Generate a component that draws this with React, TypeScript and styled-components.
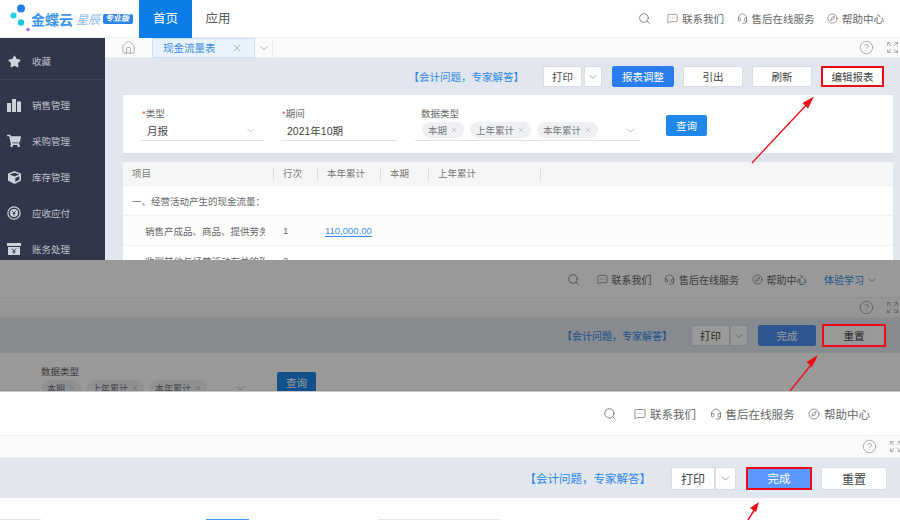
import React from 'react';
import styled, { createGlobalStyle } from 'styled-components';
import { Search, MessageSquareMore, Headset, Compass, House, X, ChevronDown, CircleHelp, Expand } from 'lucide-react';
import { FaStar, FaShoppingCart, FaCube } from 'react-icons/fa';

const Global = createGlobalStyle`
  html, body { margin: 0; padding: 0; background: #fff; }
  body { font-family: "Liberation Sans", "Noto Sans CJK SC", sans-serif; color: #555; }
  * { box-sizing: border-box; }
`;

const Page = styled.div`
  width: 900px; height: 520px; overflow: hidden;
  display: flex; flex-direction: column;
`;
const Panel = styled.section<{ $h: number; $dim?: boolean }>`
  position: relative; height: ${p => p.$h}px; overflow: hidden; flex: none; isolation: isolate;
  display: flex; flex-direction: column; background: #fff;
  ${p => p.$dim ? `&::after { content: ""; position: absolute; inset: 0; background: rgba(0,0,0,.4); z-index: 1; }` : ''}
`;
const TopBar = styled.header<{ $h: number; $pr: number; $fs: number; $pt?: number }>`
  height: ${p => p.$h}px; flex: none; display: flex; align-items: center; background: #fff;
  padding-right: ${p => p.$pr}px; padding-top: ${p => p.$pt ?? 0}px; font-size: ${p => p.$fs}px; border-bottom: 1px solid #eef0f3;
`;
const Logo = styled.div`
  width: 139px; height: 38px; position: relative; flex: none; display: flex; align-items: center; padding: 0 0 0 31px;
`;
const LogoDots = styled.svg`
  position: absolute; left: 0; top: 0;
`;
const LogoWord = styled.span`
  color: #3a94ee; font-size: 14px; font-weight: 700;
`;
const LogoStar = styled.span`
  color: #8dbdf2; font-size: 12px; font-style: italic; margin-left: 3px;
`;
const LogoBadge = styled.span`
  background: #2a83e6; color: #fff; font-size: 8px; font-style: italic; font-weight: 700;
  margin-left: 3px; padding: 0 2px; height: 10px; line-height: 10px; border-radius: 2px; width: 30px; white-space: nowrap;
`;
const NavItem = styled.div<{ $on?: boolean }>`
  width: ${p => p.$on ? 53 : 52}px; height: 38px; line-height: 38px; text-align: center; font-size: 12.5px; flex: none;
  color: ${p => p.$on ? '#fff' : '#555'}; background: ${p => p.$on ? '#0a7de8' : 'transparent'};
`;
const Actions = styled.div<{ $gap: number }>`
  margin-left: auto; display: flex; align-items: center; gap: ${p => p.$gap}px; color: #666;
`;
const Action = styled.span<{ $accent?: boolean }>`
  display: inline-flex; align-items: center; gap: 4px; white-space: nowrap;
  color: ${p => p.$accent ? '#3d8fe8' : '#666'};
`;
const SearchIcon = styled(Search)<{ $mr: number }>`
  margin-right: ${p => p.$mr}px;
`;
const AccentChevron = styled(ChevronDown)`
  margin-left: -2px; color: #777;
`;
const LearnAction = styled(Action)`
  margin-left: 5px;
`;
const TabRow = styled.div<{ $h: number }>`
  height: ${p => p.$h}px; flex: none; background: #fafafa; display: flex; align-items: center;
  border-bottom: 1px solid #eceef2; color: #8a8a8a;
`;
const HomeBox = styled.span`
  width: 47px; flex: none; display: flex; justify-content: center;
`;
const Tab = styled.div`
  width: 103px; height: 20px; display: flex; align-items: center; justify-content: space-between; flex: none;
  padding: 0 11px 0 10px; background: #e8f3fe; border: 1px solid #c6e0fa; color: #3e8be0; font-size: 10.5px;
`;
const TabMenu = styled.span`
  width: 17px; height: 20px; margin-left: 1px; display: flex; align-items: center; justify-content: center;
  border-right: 1px solid #eceef2; flex: none;
`;
const TabTools = styled.div<{ $mr: number }>`
  margin-left: auto; display: flex; align-items: center; gap: 12px; margin-right: ${p => p.$mr}px; color: #8c8c8c;
`;
const ToolBar = styled.div<{ $h: number; $pr: number }>`
  height: ${p => p.$h}px; flex: none; display: flex; align-items: center; justify-content: flex-end;
  padding-right: ${p => p.$pr}px; background: #e1e6ef;
`;
const AskLink = styled.span<{ $mr: number; $fs: number }>`
  color: #2c86e8; font-size: ${p => p.$fs}px; margin-right: ${p => p.$mr}px; white-space: nowrap;
`;
const Btn = styled.div<{ $w: number; $h?: number; $primary?: string; $ml?: number; $fs?: number }>`
  position: relative; width: ${p => p.$w}px; height: ${p => p.$h ?? 21}px; flex: none;
  margin-left: ${p => p.$ml ?? 0}px; display: flex; align-items: center; justify-content: center;
  font-size: ${p => p.$fs ?? 10.5}px; border-radius: 2px;
  color: ${p => p.$primary ? '#fff' : '#444'};
  background: ${p => p.$primary ?? '#fff'};
  border: 1px solid ${p => p.$primary ?? '#d9dce3'};
`;
const RedFrame = styled.i<{ $inset: number }>`
  position: absolute; inset: -${p => p.$inset}px; border: 2.5px solid #ee0a14; z-index: 2; pointer-events: none;
`;
const Arrow = styled.svg`
  position: absolute; left: 0; top: 0; z-index: 3; pointer-events: none;
`;
const Body = styled.div`
  flex: 1; min-height: 0; display: flex;
`;
const Side = styled.nav`
  width: 105px; flex: none; background: #32364a; display: flex; flex-direction: column; padding-top: 5px; overflow: hidden;
`;
const SideItem = styled.div<{ $first?: boolean }>`
  height: ${p => p.$first ? 37 : 36}px; flex: none; display: flex; align-items: center; gap: 11px; padding-left: 7px;
  color: #bfc2cc; font-size: 9.5px;
  ${p => p.$first ? 'border-bottom: 1px solid #3f4357; margin-bottom: 7px;' : ''}
`;
const SideIcon = styled.span`
  width: 14px; height: 14px; display: flex; align-items: center; justify-content: center; color: #cfd2d9; flex: none;
`;
const Main = styled.div`
  flex: 1; min-width: 0; display: flex; flex-direction: column; overflow: hidden;
`;
const Content = styled.div<{ $pl: number; $pr: number }>`
  flex: 1; min-height: 0; background: #e1e6ef; padding: 0 ${p => p.$pr}px 0 ${p => p.$pl}px; overflow: hidden;
`;
const FilterCard = styled.div<{ $h: number }>`
  height: ${p => p.$h}px; background: #fff; display: flex; align-items: flex-start; position: relative;
`;
const Field = styled.div<{ $w: number; $ml: number }>`
  width: ${p => p.$w}px; margin-left: ${p => p.$ml}px; flex: none; padding-top: 12px; font-size: 9.5px; color: #666;
`;
const Req = styled.b`
  color: #f25a5a; font-weight: 400;
`;
const FieldLabel = styled.div<{ $pl?: number }>`
  height: 13px; line-height: 13px; padding-left: ${p => p.$pl ?? 1}px;
`;
const FieldValue = styled.div`
  height: 21px; display: flex; align-items: center; justify-content: space-between; gap: 6px;
  border-bottom: 1px solid #dfe2e8; color: #444; font-size: 10.5px; padding: 0 8px 0 6px; white-space: nowrap;
`;
const TagRow = styled.div<{ $pl: number }>`
  height: 21px; display: flex; align-items: center; gap: 6px; border-bottom: 1px solid #dfe2e8; padding: 0 3px 0 ${p => p.$pl}px;
`;
const TagChip = styled.span<{ $fs: number; $pad: number }>`
  height: 16px; display: inline-flex; align-items: center; gap: 3px; border-radius: 8px; background: #eef0f3;
  padding: 0 ${p => p.$pad}px; color: #777; font-size: ${p => p.$fs}px; white-space: nowrap;
`;
const TagEnd = styled.span`
  flex: 1; display: flex; justify-content: flex-end; color: #999;
`;
const Query = styled.div<{ $w: number; $ml: number; $top: number }>`
  width: ${p => p.$w}px; height: 21px; margin-left: ${p => p.$ml}px; margin-top: ${p => p.$top}px; flex: none; background: #1f86ea;
  color: #fff; font-size: 10.5px; display: flex; align-items: center; justify-content: center; border-radius: 2px;
`;
const Gap = styled.div`
  height: 9px; background: #dfe3ec;
`;
const TableRow = styled.div<{ $head?: boolean; $alt?: boolean }>`
  display: grid; grid-template-columns: 151px 44px 63px 48px 112px 1fr; align-items: center;
  height: ${p => p.$head ? 24 : 30}px; font-size: 9.5px; color: ${p => p.$head ? '#777' : '#666'};
  background: ${p => p.$head ? '#f6f6f6' : p.$alt ? '#fcfcfc' : '#fff'};
  border-bottom: 1px solid #f0f1f3;
`;
const HeadCell = styled.div`
  padding-left: 9px; height: 12px; line-height: 12px; border-right: 1px solid #dcdde0;
`;
const Section = styled.div`
  padding-left: 9px; white-space: nowrap; grid-column: 1 / -1;
`;
const NameCell = styled.div`
  padding-left: 22px; width: 142px; white-space: nowrap; overflow: hidden;
`;
const NumCell = styled.div`
  padding-left: 9px;
`;
const Amount = styled.span`
  color: #3b8fe6; border-bottom: 1px solid #3b8fe6; margin-left: 7px; font-size: 9.5px; line-height: 11px; display: inline-block;
`;
const Strip = styled.div`
  height: 1px; background: #c8c8c8; flex: none;
`;
const PeekLine = styled.div`
  display: flex; height: 1px; margin-top: 21px; flex: none;
`;
const PeekSeg = styled.span<{ $w: number; $ml?: number; $c: string }>`
  width: ${p => p.$w}px; margin-left: ${p => p.$ml ?? 0}px; background: ${p => p.$c};
`;

const Dots = () => (
  <LogoDots width="40" height="38" viewBox="0 0 40 38">
    <circle cx="21" cy="8.5" r="4" fill="#1f7fe8" />
    <circle cx="13.5" cy="15.5" r="3" fill="#1fd0e0" />
    <circle cx="21" cy="22.5" r="3.2" fill="#1fc6dc" />
    <circle cx="28" cy="29.5" r="1.8" fill="#9a6de8" />
  </LogoDots>
);
const Bars = () => (
  <svg width="14" height="14" viewBox="0 0 14 14" fill="currentColor">
    <rect x="0" y="5" width="4" height="9" /><rect x="5" y="1" width="4" height="13" /><rect x="10" y="3.5" width="4" height="10.5" />
  </svg>
);
const Coin = () => (
  <svg width="16" height="16" viewBox="0 0 16 16" fill="none" stroke="currentColor">
    <circle cx="8" cy="8" r="7" strokeWidth="1.4" />
    <circle cx="8" cy="8" r="4.6" fill="currentColor" stroke="none" />
    <path d="M6 5.6 8 8l2-2.4M8 8v3M6.4 8.6h3.2" stroke="#32364a" strokeWidth="1" />
  </svg>
);
const Ledger = () => (
  <svg width="14" height="14" viewBox="0 0 14 14">
    <path d="M0 1h14v3H0zM1 5h12v8H1z" fill="currentColor" />
    <path d="M5 6.5 7 9l2-2.5M7 9v3M5.4 9.8h3.2" stroke="#32364a" strokeWidth=".9" fill="none" />
  </svg>
);

const HeaderActions = ({ size, gap, searchMr, extra }: { size: number; gap: number; searchMr: number; extra?: boolean }) => (
  <Actions $gap={gap}>
    <SearchIcon $mr={searchMr} size={size + 2} strokeWidth={1.4} />
    <Action><MessageSquareMore size={size} strokeWidth={1.4} />联系我们</Action>
    <Action><Headset size={size} strokeWidth={1.4} />售后在线服务</Action>
    <Action><Compass size={size} strokeWidth={1.4} />帮助中心</Action>
    {extra && <LearnAction $accent>体验学习<AccentChevron size={12} strokeWidth={1.4} /></LearnAction>}
  </Actions>
);
const Tools = ({ mr }: { mr: number }) => (
  <TabTools $mr={mr}>
    <CircleHelp size={15} strokeWidth={1.1} />
    <Expand size={13} strokeWidth={1.3} />
  </TabTools>
);
const Chip = ({ children, fs, pad }: { children: React.ReactNode; fs: number; pad: number }) => (
  <TagChip $fs={fs} $pad={pad}>{children}<X size={8} strokeWidth={1.3} color="#999" /></TagChip>
);
const Chips = ({ fs, pad }: { fs: number; pad: number }) => (
  <>
    <Chip fs={fs} pad={pad}>本期</Chip><Chip fs={fs} pad={pad}>上年累计</Chip><Chip fs={fs} pad={pad}>本年累计</Chip>
  </>
);

export default function App() {
  return (
    <Page>
      <Global />
      <Panel $h={260}>
        <TopBar $h={38} $pr={16} $fs={10.5}>
          <Logo>
            <Dots />
            <LogoWord>金蝶云</LogoWord><LogoStar>星辰</LogoStar><LogoBadge>专业版</LogoBadge>
          </Logo>
          <NavItem $on>首页</NavItem>
          <NavItem>应用</NavItem>
          <HeaderActions size={11} gap={12.5} searchMr={4} />
        </TopBar>
        <Body>
          <Side>
            <SideItem $first><SideIcon><FaStar size={13} /></SideIcon>收藏</SideItem>
            <SideItem><SideIcon><Bars /></SideIcon>销售管理</SideItem>
            <SideItem><SideIcon><FaShoppingCart size={14} /></SideIcon>采购管理</SideItem>
            <SideItem><SideIcon><FaCube size={13} /></SideIcon>库存管理</SideItem>
            <SideItem><SideIcon><Coin /></SideIcon>应收应付</SideItem>
            <SideItem><SideIcon><Ledger /></SideIcon>账务处理</SideItem>
          </Side>
          <Main>
            <TabRow $h={20}>
              <HomeBox><House size={15} strokeWidth={1.1} /></HomeBox>
              <Tab>现金流量表<X size={12} strokeWidth={1.2} color="#8a8a8a" /></Tab>
              <TabMenu><ChevronDown size={14} strokeWidth={1.2} /></TabMenu>
              <Tools mr={1} />
            </TabRow>
            <ToolBar $h={37} $pr={16}>
              <AskLink $mr={19} $fs={10.5}>【会计问题，专家解答】</AskLink>
              <Btn $w={39}>打印</Btn>
              <Btn $w={18} $ml={2}><ChevronDown size={12} strokeWidth={1.3} color="#777" /></Btn>
              <Btn $w={62} $ml={10} $primary="#2a7df0">报表调整</Btn>
              <Btn $w={60} $ml={9}>引出</Btn>
              <Btn $w={60} $ml={9}>刷新</Btn>
              <Btn $w={63} $ml={9}>编辑报表<RedFrame $inset={1} /></Btn>
            </ToolBar>
            <Content $pl={18} $pr={7}>
              <FilterCard $h={58}>
                <Field $w={123} $ml={18}>
                  <FieldLabel><Req>*</Req>类型</FieldLabel>
                  <FieldValue>月报<ChevronDown size={11} strokeWidth={1.2} color="#888" /></FieldValue>
                </Field>
                <Field $w={116} $ml={17}>
                  <FieldLabel><Req>*</Req>期间</FieldLabel>
                  <FieldValue>2021年10期</FieldValue>
                </Field>
                <Field $w={225} $ml={18}>
                  <FieldLabel $pl={6}>数据类型</FieldLabel>
                  <TagRow $pl={7}><Chips fs={9.5} pad={6} /><TagEnd><ChevronDown size={13} strokeWidth={1.2} /></TagEnd></TagRow>
                </Field>
                <Query $w={41} $ml={26} $top={20}>查询</Query>
              </FilterCard>
              <Gap />
              <TableRow $head>
                <HeadCell>项目</HeadCell><HeadCell>行次</HeadCell><HeadCell>本年累计</HeadCell>
                <HeadCell>本期</HeadCell><HeadCell>上年累计</HeadCell>
              </TableRow>
              <TableRow><Section>一、经营活动产生的现金流量：</Section></TableRow>
              <TableRow $alt>
                <NameCell>销售产成品、商品、提供劳务收到的现金</NameCell>
                <NumCell>1</NumCell><div><Amount>110,000.00</Amount></div>
              </TableRow>
              <TableRow>
                <NameCell>收到其他与经营活动有关的现金</NameCell>
                <NumCell>2</NumCell>
              </TableRow>
            </Content>
          </Main>
        </Body>
        <Arrow width="900" height="260" viewBox="0 0 900 260">
          <path d="M752 163 810 101" stroke="#ee0a14" strokeWidth="1.3" fill="none" />
          <path d="M814 96.5 802.5 103 808 108.5Z" fill="#ee0a14" />
        </Arrow>
      </Panel>

      <Panel $h={131} $dim>
        <TopBar $h={38} $pr={22} $fs={10} $pt={2}>
          <HeaderActions size={11} gap={12.5} searchMr={4} extra />
        </TopBar>
        <TabRow $h={20}>
          <Tools mr={1} />
        </TabRow>
        <ToolBar $h={35} $pr={15}>
          <AskLink $mr={19} $fs={10}>【会计问题，专家解答】</AskLink>
          <Btn $w={39}>打印</Btn>
          <Btn $w={18}><ChevronDown size={12} strokeWidth={1.3} color="#777" /></Btn>
          <Btn $w={58} $ml={10} $primary="#4c8ef0">完成</Btn>
          <Btn $w={62} $ml={7}>重置<RedFrame $inset={2} /></Btn>
        </ToolBar>
        <FilterCard $h={38}>
          <Field $w={217} $ml={33}>
            <FieldLabel $pl={8}>数据类型</FieldLabel>
            <TagRow $pl={9}><Chips fs={9} pad={5} /><TagEnd><ChevronDown size={13} strokeWidth={1.2} /></TagEnd></TagRow>
          </Field>
          <Query $w={39} $ml={27} $top={19}>查询</Query>
        </FilterCard>
        <Arrow width="900" height="131" viewBox="0 0 900 131">
          <path d="M790 131 815 100" stroke="#ee0a14" strokeWidth="1.3" fill="none" />
          <path d="M818 95 806.5 102 812 107Z" fill="#ee0a14" />
        </Arrow>
      </Panel>

      <Panel $h={129}>
        <Strip />
        <TopBar $h={44} $pr={30} $fs={11.5}>
          <HeaderActions size={12} gap={13.5} searchMr={4} />
        </TopBar>
        <TabRow $h={22}>
          <Tools mr={-2} />
        </TabRow>
        <ToolBar $h={40} $pr={13}>
          <AskLink $mr={20} $fs={11.5}>【会计问题，专家解答】</AskLink>
          <Btn $w={44} $h={23} $fs={12}>打印</Btn>
          <Btn $w={21} $h={23}><ChevronDown size={13} strokeWidth={1.3} color="#777" /></Btn>
          <Btn $w={64} $ml={11} $fs={11.5} $primary="#5a97ff">完成<RedFrame $inset={2} /></Btn>
          <Btn $w={66} $h={23} $ml={10} $fs={12}>重置</Btn>
        </ToolBar>
        <PeekLine>
          <PeekSeg $w={41} $c="#e4e4e4" />
          <PeekSeg $w={43} $ml={165} $c="#3a9aff" />
          <PeekSeg $w={122} $ml={129} $c="#e8e8e8" />
        </PeekLine>
        <Arrow width="900" height="129" viewBox="0 0 900 129">
          <path d="M748 129 755 118" stroke="#ee0a14" strokeWidth="1.5" fill="none" />
          <path d="M759 111 750 117 756 121Z" fill="#ee0a14" />
        </Arrow>
      </Panel>
    </Page>
  );
}
